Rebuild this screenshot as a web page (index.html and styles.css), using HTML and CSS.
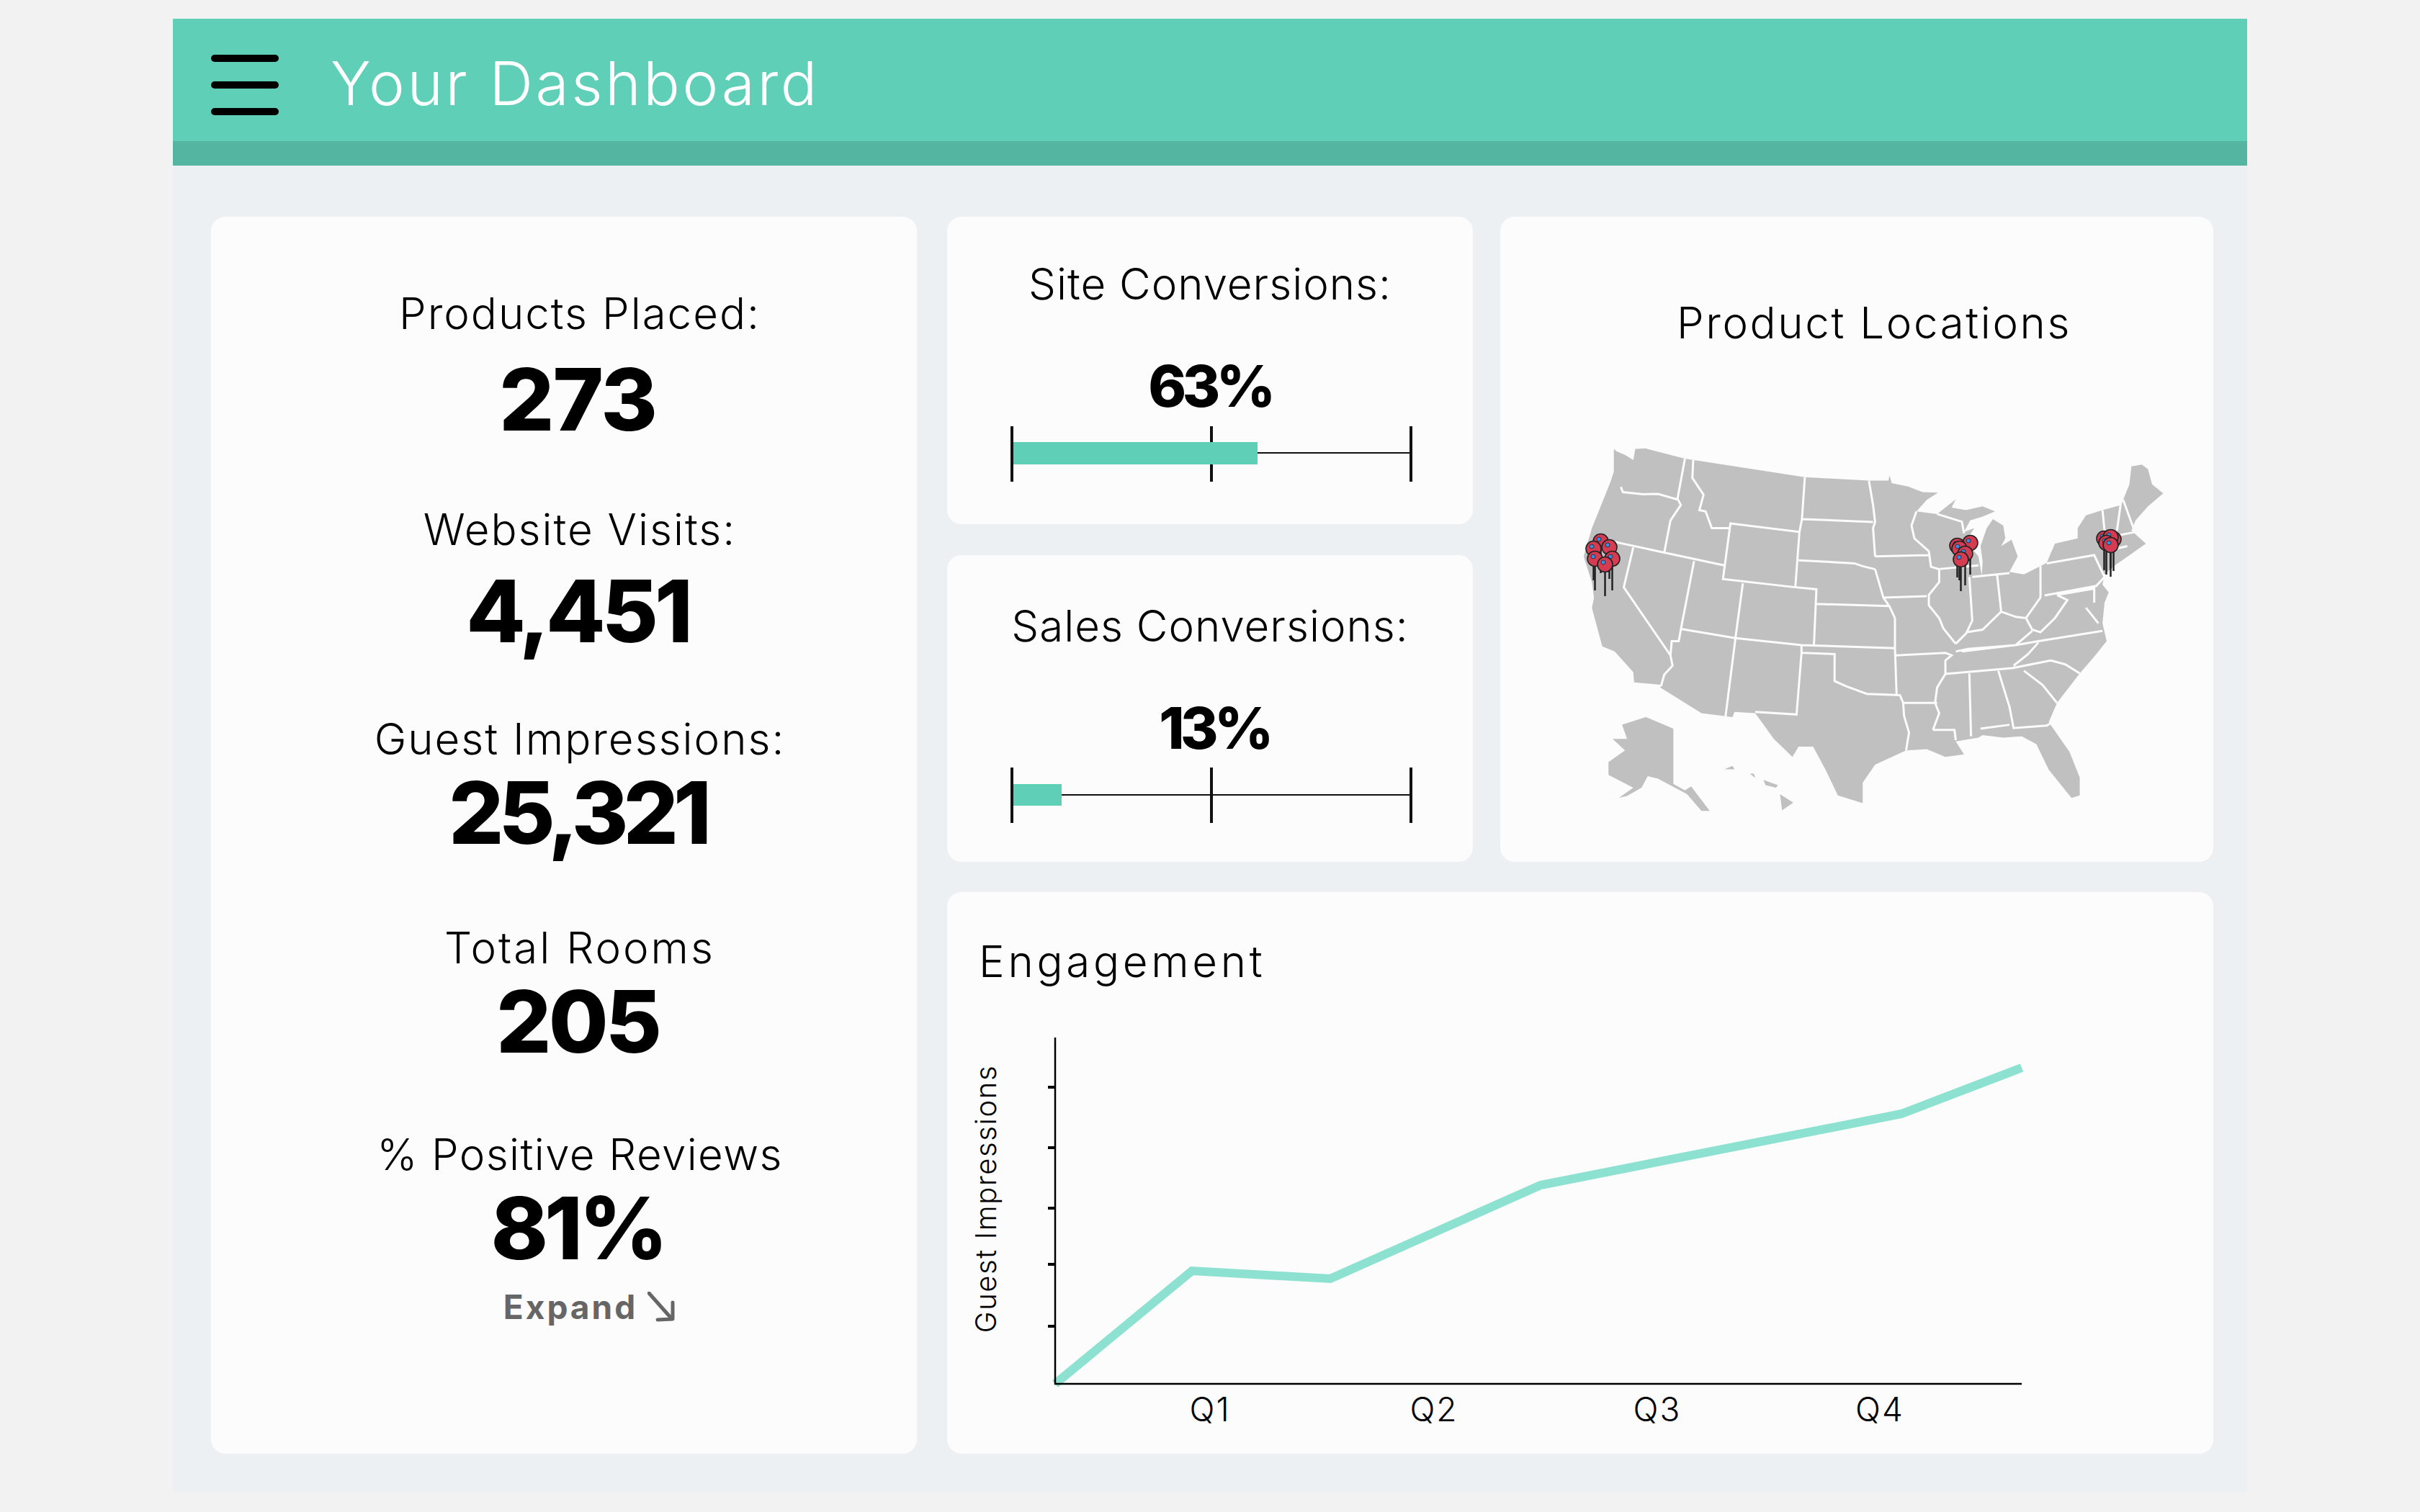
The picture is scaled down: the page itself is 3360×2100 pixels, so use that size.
FILE: index.html
```html
<!DOCTYPE html>
<html lang="en">

<head>
    <meta charset="UTF-8">
    <link rel="stylesheet" href="styles.css">
    <title>Your Dashboard</title>
</head>

<body>
    <div id="panel">
        <div id="header">
            <div class="burger"><span></span><span></span><span></span></div>
            <h1>Your Dashboard</h1>
        </div>

        <div id="contents">
            <div class="card stats">
                <div class="stat first">
                    <div class="label">Products Placed:</div>
                    <div class="number">273</div>
                </div>
                <div class="stat second">
                    <div class="label">Website Visits:</div>
                    <div class="number">4,451</div>
                </div>
                <div class="stat third">
                    <div class="label">Guest Impressions:</div>
                    <div class="number">25,321</div>
                </div>
                <div class="stat fourth">
                    <div class="label">Total Rooms</div>
                    <div class="number">205</div>
                </div>
                <div class="stat fifth">
                    <div class="label">% Positive Reviews</div>
                    <div class="number">81%</div>
                </div>
                <div class="expand">Expand
                    <svg width="38" height="42" viewBox="0 0 38 42">
                        <path d="M2 2 L34 38 M35 15 L35 38 L14 39" class="expand-arrow" />
                    </svg>
                </div>
            </div>

            <div class="right">
                <div class="card conv site">
                    <div class="label">Site Conversions:</div>
                    <div class="percent">63%</div>
                    <svg class="bar" width="560" height="78" viewBox="0 0 560 78">
                        <line x1="2" y1="37" x2="556" y2="37" class="bar-line" />
                        <line x1="279" y1="0" x2="279" y2="77" class="bar-tick" />
                        <rect x="2" y="22" width="341" height="31" class="bar-fill" />
                        <line x1="2" y1="0" x2="2" y2="77" class="bar-tick" />
                        <line x1="556" y1="0" x2="556" y2="77" class="bar-tick" />
                    </svg>
                </div>

                <div class="card map">
                    <div class="label">Product Locations</div>
                    <svg class="usa" width="900" height="560" viewBox="0 0 900 560">
                        <defs>
                            <g id="pin">
                                <line x1="2.5" y1="3" x2="2.5" y2="47" class="pin-needle" />
                                <circle cx="2.5" cy="3" r="10.5" class="pin-head" />
                                <circle cx="0" cy="0" r="3" class="pin-dot" />
                            </g>
                        </defs>
                        <g transform="scale(0.574 0.357)">
                            <!-- lower 48 -->
                            <path class="land" d="M158 122 L165 132 L185 145 L205 165 L210 122 L235 120 L330 160 L620 232 L775 245 L822 245 L825 225 L830 255 L870 268 L905 290 L942 292 L915 320 L890 365 L940 375 L985 318 L975 350 L1010 360 L1050 345 L1080 365 L1050 385 L1020 400 L1005 445 L1030 430 L1010 480 L1040 540 L1048 615 L1050 560 L1045 500 L1060 430 L1075 395 L1100 420 L1105 470 L1095 500 L1120 475 L1135 540 L1115 600 L1150 610 L1190 578 L1205 565 L1225 490 L1280 470 L1280 430 L1300 380 L1340 360 L1385 340 L1405 260 L1410 190 L1435 183 L1450 200 L1460 260 L1487 295 L1450 345 L1420 400 L1410 440 L1445 490 L1410 530 L1370 575 L1345 610 L1340 650 L1355 680 L1345 720 L1340 800 L1350 870 L1320 930 L1285 995 L1230 1110 L1210 1185 L1260 1300 L1285 1400 L1285 1470 L1265 1480 L1210 1370 L1180 1270 L1145 1240 L1100 1245 L1050 1235 L1040 1245 L985 1260 L1005 1310 L960 1320 L915 1290 L865 1295 L790 1350 L760 1420 L760 1500 L700 1470 L670 1370 L640 1280 L605 1280 L590 1320 L545 1250 L500 1150 L450 1145 L445 1165 L370 1150 L270 1050 L275 1040 L207 1030 L205 990 L160 910 L130 890 L105 740 L110 700 L105 640 L85 540 L105 430 L150 250 L158 210 Z" />
                            <!-- alaska and hawaii -->
                            <path class="land" d="M115 1500 L170 1480 L205 1440 L145 1390 L145 1340 L185 1295 L155 1250 L190 1250 L178 1195 L235 1165 L302 1210 L302 1425 L330 1450 L345 1435 L390 1530 L370 1530 L335 1465 L265 1405 L240 1395 L225 1440 L190 1472 Z" />
                            <path class="land" d="M425 1368 L445 1355 L450 1368 Z M487 1385 L497 1385 L500 1402 Z M520 1410 L555 1430 L550 1440 L525 1430 Z M560 1465 L592 1498 L565 1528 Z" />
                            <!-- state borders -->
                            <path class="border" d="M175 270 L180 290 L230 298 L265 297 L315 320 M330 160 L312 315 L320 340 L295 400 L280 525 M350 165 L348 235 L375 300 L365 360 L380 365 L395 430 L437 430 M440 412 L607 445 L597 660 L422 628 Z M150 480 L280 525 L425 575 M205 505 L182 660 L295 925 L300 965 L280 1000 L272 1045 M352 558 L320 825 L315 870 L298 870 L295 925 M470 645 L452 860 L428 1165 M320 822 L452 858 L612 885 L838 897 M597 660 L648 668 L642 885 M620 232 L613 395 L607 445 M613 395 L785 406 M775 245 L785 340 L790 406 L785 430 L790 540 M605 555 L740 567 L760 578 L790 590 M648 725 L825 733 M790 590 L810 700 L825 735 L838 780 L838 897 M790 540 L920 535 M810 700 L915 695 M890 365 L878 420 L885 470 L920 520 L925 580 L945 590 L945 640 L920 690 L920 730 L945 780 L955 820 L985 880 M940 590 L1040 575 M1018 620 L1025 790 L1010 840 L985 880 M1085 610 L1095 755 M1025 620 L1115 605 M1012 835 L1050 825 L1095 755 L1130 775 L1155 780 L1190 700 L1190 578 M1205 567 L1320 535 L1345 620 L1325 655 L1200 692 M1155 780 L1170 825 L1190 835 L1225 780 L1255 710 L1230 690 M1000 910 L1130 885 L1185 870 L1340 830 M1130 885 L1170 830 M985 910 L1015 900 L1130 885 M1185 875 L1160 920 L1125 965 M840 925 L960 915 L975 925 L960 945 L960 997 M960 997 L1120 975 L1215 945 L1250 960 L1285 995 M1150 985 L1195 1040 L1230 1110 M1088 985 L1115 1125 L1125 1208 L1205 1198 L1220 1185 M1018 995 L1022 1240 M1045 1210 L1115 1195 M930 1215 L982 1215 L985 1255 M960 997 L940 1050 L935 1110 L945 1150 L930 1215 M858 1110 L940 1110 M858 1110 L860 1160 L872 1225 L865 1295 M612 885 L612 915 L692 920 L692 1025 L720 1045 L770 1075 L850 1080 L858 1110 M838 897 L842 1080 M612 915 L600 1155 L500 1145 M1340 360 L1345 440 L1345 520 M1385 325 L1375 440 M1390 320 L1415 430 M1340 470 L1420 445 M1345 520 L1400 500 M1230 690 L1320 665 L1320 720 M1300 740 L1330 800 M940 375 L1000 405 L1005 450" />
                        </g>
                        <use href="#pin" x="70" y="169" />
                        <use href="#pin" x="82" y="177" />
                        <use href="#pin" x="60" y="179" />
                        <use href="#pin" x="86" y="193" />
                        <use href="#pin" x="62" y="193" />
                        <use href="#pin" x="76" y="201" />
                        <use href="#pin" x="583" y="171" />
                        <use href="#pin" x="565" y="175" />
                        <use href="#pin" x="568" y="179" />
                        <use href="#pin" x="576" y="186" />
                        <use href="#pin" x="570" y="194" />
                        <use href="#pin" x="769" y="165" />
                        <use href="#pin" x="782" y="166" />
                        <use href="#pin" x="778" y="163" />
                        <use href="#pin" x="772" y="171" />
                        <use href="#pin" x="778" y="174" />
                    </svg>
                </div>

                <div class="card conv sales">
                    <div class="label">Sales Conversions:</div>
                    <div class="percent">13%</div>
                    <svg class="bar" width="560" height="78" viewBox="0 0 560 78">
                        <line x1="2" y1="38" x2="556" y2="38" class="bar-line" />
                        <line x1="279" y1="0" x2="279" y2="77" class="bar-tick" />
                        <rect x="2" y="23" width="69" height="30" class="bar-fill" />
                        <line x1="2" y1="0" x2="2" y2="77" class="bar-tick" />
                        <line x1="556" y1="0" x2="556" y2="77" class="bar-tick" />
                    </svg>
                </div>

                <div class="card engagement">
                    <div class="label">Engagement</div>
                    <svg class="chart" width="1530" height="610" viewBox="0 0 1530 610">
                        <polyline points="150,522 340,365 532,376 824,246 1325,147 1492,83" class="chart-line" />
                        <path d="M150 41 L150 522 L1492 522" class="chart-axis" />
                        <path d="M140 110 H150 M140 194 H150 M140 278 H150 M140 356 H150 M140 442 H150" class="chart-ticks" />
                        <text x="68" y="265" transform="rotate(-90 68 265)" class="chart-ylabel">Guest Impressions</text>
                        <text x="365" y="574" class="chart-q">Q1</text>
                        <text x="676" y="574" class="chart-q">Q2</text>
                        <text x="986" y="574" class="chart-q">Q3</text>
                        <text x="1295" y="574" class="chart-q">Q4</text>
                    </svg>
                </div>
            </div>
        </div>
    </div>
</body>

</html>
```

FILE: styles.css
```css
@charset "UTF-8";

/* ========BASIC======== */
body {
    margin: 0;
    padding: 0;
    font-family: Inter, "Open Sans", sans-serif;
    color: #000;
    background: #f2f2f2;
}

h1 {
    margin: 0;
}

svg {
    display: block;
}

/* ========LAYOUT======== */
#panel {
    width: 2880px;
    margin: 26px auto 28px;
    background: #edf0f3;
}

#header {
    display: flex;
    align-items: center;
    box-sizing: border-box;
    height: 204px;
    padding: 13px 0 0 53px;
    background: #5fcfb7;
    border-bottom: 34px solid #54b5a0;
}

#header h1 {
    margin: 0 0 4px 72px;
    font-size: 84px;
    font-weight: 300;
    letter-spacing: 3.6px;
    color: #fff;
}

.burger {
    display: flex;
    flex-direction: column;
    gap: 27px;
}

.burger span {
    display: block;
    width: 94px;
    height: 10px;
    border-radius: 5px;
    background: #000;
}

#contents {
    display: flex;
    gap: 42px;
    padding: 71px 47px 53px 53px;
}

.right {
    display: grid;
    grid-template-columns: 730px 990px;
    grid-template-rows: 427px 426px 780px;
    column-gap: 38px;
    row-gap: 42.5px;
}

.card {
    border-radius: 20px;
    background: #fcfcfc;
}

.label {
    height: 70px;
    font-size: 60px;
    font-weight: 300;
    letter-spacing: 2px;
    line-height: 70px;
    text-align: center;
    white-space: nowrap;
}

/* ========STATS======== */
.stats {
    box-sizing: border-box;
    width: 980px;
    padding: 99px 0 0 44px;
}

.number {
    height: 130px;
    padding-right: 6px;
    font-size: 120px;
    font-weight: 800;
    letter-spacing: -5px;
    line-height: 130px;
    text-align: center;
}

.first .number { margin-top: 20px; letter-spacing: -2px; }
.first { margin-bottom: 80px; }
.second .number { margin-top: 14px; }
.second { margin-bottom: 77px; }
.third .number { margin-top: 3px; letter-spacing: -7px; }
.third { margin-bottom: 87px; }
.fourth .number { margin-top: 3px; letter-spacing: -4px; }
.fourth .label { letter-spacing: 3px; }
.fourth { margin-bottom: 84px; }
.fifth .number { margin-top: 3px; }
.fifth .label { letter-spacing: 1.4px; }

.expand {
    display: flex;
    justify-content: center;
    align-items: center;
    gap: 14px;
    margin-top: 19px;
    padding-left: 26px;
    font-size: 46px;
    font-weight: 700;
    letter-spacing: 3px;
    line-height: 50px;
    color: #666;
}

.expand-arrow {
    fill: none;
    stroke: #666;
    stroke-width: 5;
    stroke-linecap: round;
    stroke-linejoin: round;
}

/* ========CONVERSIONS======== */
.conv {
    padding-top: 58px;
}

.conv .label {
    letter-spacing: 1px;
}

.sales {
    padding-top: 63px;
}

.percent {
    height: 90px;
    margin-top: 62px;
    font-size: 80px;
    font-weight: 800;
    letter-spacing: -5.5px;
    line-height: 90px;
    text-align: center;
}

.sales .percent {
    padding-left: 12px;
}

.bar {
    margin: 11px 0 0 88px;
}

.sales .bar {
    margin-top: 10px;
}

.bar-line {
    stroke: #111;
    stroke-width: 2;
}

.bar-tick {
    stroke: #111;
    stroke-width: 4;
}

.bar-fill {
    fill: #5fcfb7;
}

/* ========MAP======== */
.map {
    grid-column: 2;
    grid-row: 1 / 3;
    padding-top: 112px;
}

.map .label {
    padding-left: 48px;
    letter-spacing: 2.6px;
}

.usa {
    margin: 97px 0 0 67px;
}

.land {
    fill: #c0c0c0;
}

.border {
    fill: none;
    stroke: #fcfcfc;
    stroke-width: 3;
    vector-effect: non-scaling-stroke;
}

.pin-needle {
    stroke: #222;
    stroke-width: 2.5;
}

.pin-head {
    fill: #d53c52;
    stroke: #222;
    stroke-width: 1.6;
}

.pin-dot {
    fill: #3a8de0;
    stroke: #222;
    stroke-width: 0.8;
}

/* ========ENGAGEMENT======== */
.engagement {
    grid-column: 1 / 3;
    padding-top: 61px;
}

.engagement .label {
    padding-left: 44px;
    letter-spacing: 4.7px;
    text-align: left;
}

.chart {
    margin-top: 30px;
}

.chart-line {
    fill: none;
    stroke: #8ce1d0;
    stroke-width: 12;
}

.chart-axis {
    fill: none;
    stroke: #000;
    stroke-width: 2.5;
}

.chart-ticks {
    stroke: #000;
    stroke-width: 4;
}

.chart-ylabel {
    font-size: 40px;
    font-weight: 300;
    letter-spacing: 1.6px;
    text-anchor: middle;
}

.chart-q {
    font-size: 46px;
    font-weight: 300;
    letter-spacing: 2px;
    text-anchor: middle;
}
```
